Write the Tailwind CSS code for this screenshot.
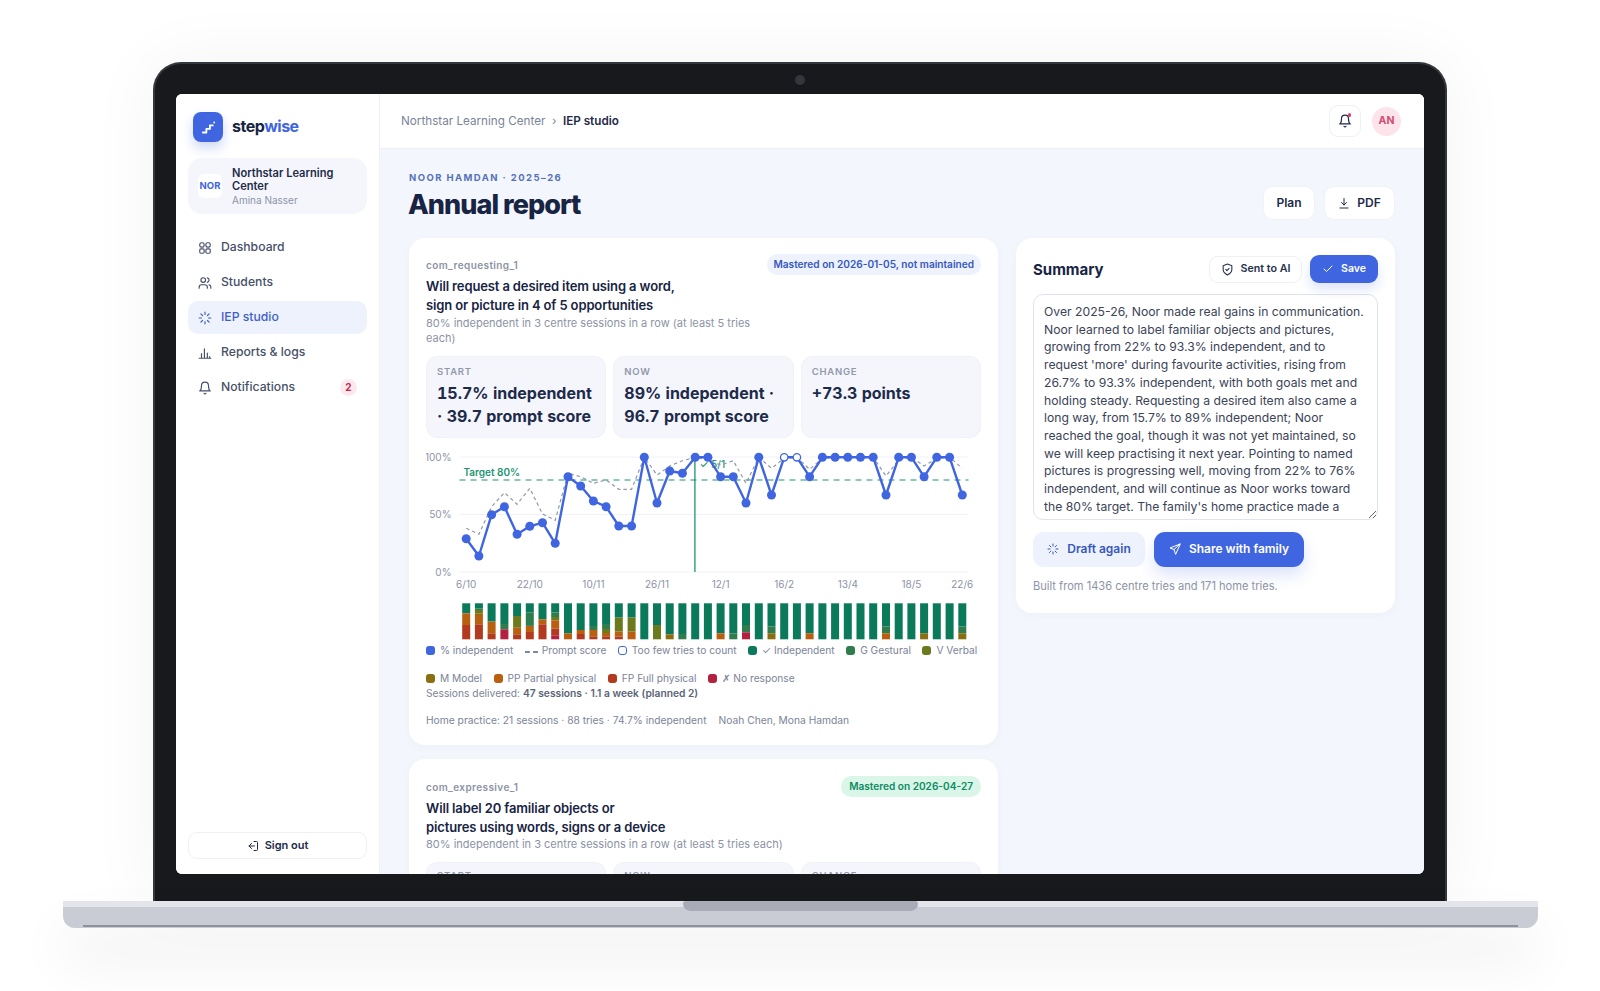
<!DOCTYPE html>
<html lang="en">

<head>
    <meta charset="UTF-8">
    <meta name="viewport" content="width=device-width, initial-scale=1.0">
    <title>Stepwise - Annual report</title>
    <script src="https://cdn.jsdelivr.net/npm/@tailwindcss/browser@4"></script>
</head>

<body class="bg-white font-['Inter',sans-serif]">
    <div class="w-[1600px] h-[991px] overflow-hidden flex flex-col items-center pt-[62px]">

        <!-- lid -->
        <div class="relative z-10 w-[1294px] h-[839px] shrink-0 bg-[#17191d] rounded-t-[28px] border-t-2 border-x-2 border-[#34373c] px-[21px] pt-[30px] pb-[26px] shadow-[0_0_70px_rgba(0,0,0,0.05)]">
            <div class="absolute left-1/2 top-[11px] -ml-[5px] w-[10px] h-[10px] rounded-full bg-[#33363b]"></div>

            <!-- screen -->
            <div class="flex h-[780px] w-[1248px] overflow-hidden rounded-[6px] bg-white">

                <!-- sidebar -->
                <aside class="w-[204px] shrink-0 border-r border-[#eef0f6] bg-white flex flex-col px-3 pt-[18px] pb-[15px]">
                    <div class="flex items-center gap-[9px] pl-[5px]">
                        <div class="w-[30px] h-[30px] rounded-[8px] bg-[#3f66e0] flex items-center justify-center shadow-[0_6px_12px_rgba(63,102,224,0.25)]">
                            <svg width="17" height="17" viewBox="0 0 24 24" fill="none" stroke="white" stroke-width="2.6" stroke-linecap="round" stroke-linejoin="round"><path d="M4 19h5v-5h5V9h4" /><path d="M20 5h.01" /></svg>
                        </div>
                        <div class="-mt-[2px] text-[16px] font-bold tracking-[-0.03em] text-[#172443]">step<span class="text-[#3f66e0]">wise</span></div>
                    </div>

                    <div class="mt-[16px] h-[56px] rounded-[14px] bg-[#f4f6fc] flex items-center gap-[10px] pl-[10px] pr-2">
                        <div class="w-6 h-6 shrink-0 rounded-[6px] bg-white flex items-center justify-center text-[9.5px] font-bold text-[#3f66e0]">NOR</div>
                        <div class="pt-[2px]">
                            <div class="text-[11.1px] leading-[13px] font-semibold text-[#1e2a4a]">Northstar Learning Center</div>
                            <div class="text-[10px] leading-[15px] text-[#8c93a6]">Amina Nasser</div>
                        </div>
                    </div>

                    <nav class="mt-[17px] flex flex-col gap-[2px] text-[12.2px] font-medium text-[#475069]">
                        <a class="h-[33px] flex items-center gap-[9px] px-[10px]">
                            <svg class="w-[14px] h-[14px]" viewBox="0 0 24 24" fill="none" stroke="currentColor" stroke-width="2"><rect x="3" y="3" width="7.5" height="7.5" rx="3" /><rect x="13.5" y="3" width="7.5" height="7.5" rx="3" /><rect x="3" y="13.5" width="7.5" height="7.5" rx="2" /><rect x="13.5" y="13.5" width="7.5" height="7.5" rx="2" /></svg>
                            Dashboard
                        </a>
                        <a class="h-[33px] flex items-center gap-[9px] px-[10px]">
                            <svg class="w-[14px] h-[14px]" viewBox="0 0 24 24" fill="none" stroke="currentColor" stroke-width="2" stroke-linecap="round"><path d="M16 21v-2a4 4 0 0 0-4-4H6a4 4 0 0 0-4 4v2" /><circle cx="9" cy="7" r="4" /><path d="M22 21v-2a4 4 0 0 0-3-3.87" /><path d="M16 3.13a4 4 0 0 1 0 7.75" /></svg>
                            Students
                        </a>
                        <a class="h-[33px] flex items-center gap-[9px] px-[10px] rounded-[10px] bg-[#eef2fd] text-[#3f5fc8]">
                            <svg class="w-[14px] h-[14px]" viewBox="0 0 24 24" fill="none" stroke="currentColor" stroke-width="2" stroke-linecap="round"><path d="M12 2v4M12 18v4M4.93 4.93l2.83 2.83M16.24 16.24l2.83 2.83M2 12h4M18 12h4M4.93 19.07l2.83-2.83M16.24 7.76l2.83-2.83" /></svg>
                            IEP studio
                        </a>
                        <a class="h-[33px] flex items-center gap-[9px] px-[10px]">
                            <svg class="w-[14px] h-[14px]" viewBox="0 0 24 24" fill="none" stroke="currentColor" stroke-width="2" stroke-linecap="round"><path d="M2 21h20M6 21v-8M11 21V5M16 21v-9M20 21v-3" /></svg>
                            Reports &amp; logs
                        </a>
                        <a class="h-[33px] flex items-center gap-[9px] px-[10px]">
                            <svg class="w-[14px] h-[14px]" viewBox="0 0 24 24" fill="none" stroke="currentColor" stroke-width="2" stroke-linecap="round" stroke-linejoin="round"><path d="M6 8a6 6 0 0 1 12 0c0 7 3 9 3 9H3s3-2 3-9" /><path d="M10.3 21a1.94 1.94 0 0 0 3.4 0" /></svg>
                            Notifications
                            <span class="ml-auto w-[17px] h-[17px] rounded-full bg-[#fde8ee] text-[#be2d55] text-[10px] font-bold flex items-center justify-center">2</span>
                        </a>
                    </nav>

                    <button class="mt-auto h-[27px] rounded-[9px] border border-[#eef0f6] bg-white flex items-center justify-center gap-[6px] text-[11px] font-semibold text-[#1e2a4a]">
                        <svg class="w-3 h-3" viewBox="0 0 24 24" fill="none" stroke="currentColor" stroke-width="2" stroke-linecap="round" stroke-linejoin="round"><path d="M14 3h5a2 2 0 0 1 2 2v14a2 2 0 0 1-2 2h-5" /><path d="M9 17l-5-5 5-5" /><path d="M4 12h11" /></svg>
                        Sign out
                    </button>
                </aside>

                <!-- main -->
                <div class="flex-1 min-w-0 flex flex-col bg-[#f4f6fd]">
                    <header class="h-[55px] shrink-0 bg-white border-b border-[#eef0f6] flex items-center pl-[21px] pr-[23px]">
                        <div class="pt-[2px] text-[11.7px] text-[#7b8499]">Northstar Learning Center<span class="mx-[6.5px]">›</span><span class="font-semibold text-[#1e2a4a]">IEP studio</span></div>
                        <div class="ml-auto flex items-center gap-[11px]">
                            <div class="relative w-[32px] h-[32px] rounded-[9px] border border-[#eef0f6] flex items-center justify-center">
                                <svg class="w-[14px] h-[14px] text-[#1e2a4a]" viewBox="0 0 24 24" fill="none" stroke="currentColor" stroke-width="2" stroke-linecap="round" stroke-linejoin="round"><path d="M6 8a6 6 0 0 1 12 0c0 7 3 9 3 9H3s3-2 3-9" /><path d="M10.3 21a1.94 1.94 0 0 0 3.4 0" /></svg>
                                <span class="absolute top-[7px] right-[9px] w-[3.5px] h-[3.5px] rounded-full bg-[#e0405f]"></span>
                            </div>
                            <div class="w-[29px] h-[29px] rounded-full bg-[#fde3ea] text-[#d14d72] text-[10.5px] font-bold flex items-center justify-center">AN</div>
                        </div>
                    </header>

                    <div class="flex-1 min-h-0 overflow-hidden px-[29px] pt-[22px]">
                        <div class="flex items-end justify-between">
                            <div>
                                <div class="text-[9.5px] leading-[14px] font-bold tracking-[0.15em] text-[#5472b8]">NOOR HAMDAN · 2025–26</div>
                                <h1 class="mt-[3px] -ml-px text-[27px] leading-[34px] font-extrabold tracking-[-0.035em] text-[#172443]">Annual report</h1>
                            </div>
                            <div class="flex gap-[9px] mb-[2px]">
                                <button class="w-[52px] h-[34px] pb-px rounded-[10px] bg-white border border-[#f0f2f8] text-[12px] font-semibold text-[#1e2a4a]">Plan</button>
                                <button class="w-[71px] h-[34px] pb-px rounded-[10px] bg-white border border-[#f0f2f8] text-[12px] font-semibold text-[#1e2a4a] flex items-center justify-center gap-[7px]">
                                    <svg class="w-3 h-3" viewBox="0 0 24 24" fill="none" stroke="currentColor" stroke-width="2" stroke-linecap="round" stroke-linejoin="round"><path d="M12 3v13M7 11l5 5 5-5M4 22h16" /></svg>
                                    PDF
                                </button>
                            </div>
                        </div>

                        <div class="mt-[16px] grid grid-cols-[589px_379px] gap-[18px] items-start">
                            <!-- goals -->
                            <div class="flex flex-col gap-[14px]">
                                <section class="rounded-[16px] bg-white pt-4 pb-[17px] px-[17px] shadow-[0_2px_10px_rgba(40,60,120,0.03)]">
                                    <div class="flex items-start justify-between gap-2">
                                        <div class="min-w-0 flex-1">
                                            <div class="pt-[4px] text-[10px] leading-[14px] font-semibold tracking-[0.04em] text-[#8c93a6]">com_requesting_1</div>
                                            <h2 class="mt-[5px] text-[13px] leading-[19px] font-semibold tracking-[-0.01em] text-[#172443]">Will request a desired item using a word,<br>sign or picture in 4 of 5 opportunities</h2>
                                            <p class="pt-[0.5px] text-[11px] leading-[15.5px] text-[#8c93a6]">80% independent in 3 centre sessions in a row (at least 5 tries each)</p>
                                        </div>
                                        <span class="shrink-0 h-[21px] px-[7px] rounded-full bg-[#eef2fd] text-[10.1px] leading-[21px] font-semibold text-[#3558c0]">Mastered on 2026-01-05, not maintained</span>
                                    </div>

                                    <div class="mt-[9.5px] grid grid-cols-3 gap-[7px]">
                                        <div class="rounded-[11px] bg-[#f4f6fc] border border-[#f0f2f9] pl-[10px] pr-1 pt-[7.5px] pb-2">
                                            <div class="text-[9.5px] leading-[14px] font-semibold tracking-[0.08em] text-[#9198ab]">START</div>
                                            <div class="mt-[3px] text-[16px] leading-[23.5px] font-bold tabular-nums text-[#1e2a4a]">15.7% independent · 39.7 prompt score</div>
                                        </div>
                                        <div class="rounded-[11px] bg-[#f4f6fc] border border-[#f0f2f9] pl-[10px] pr-1 pt-[7.5px] pb-2">
                                            <div class="text-[9.5px] leading-[14px] font-semibold tracking-[0.08em] text-[#9198ab]">NOW</div>
                                            <div class="mt-[3px] text-[16px] leading-[23.5px] font-bold tabular-nums text-[#1e2a4a]">89% independent · 96.7 prompt score</div>
                                        </div>
                                        <div class="rounded-[11px] bg-[#f4f6fc] border border-[#f0f2f9] pl-[10px] pr-1 pt-[7.5px] pb-2">
                                            <div class="text-[9.5px] leading-[14px] font-semibold tracking-[0.08em] text-[#9198ab]">CHANGE</div>
                                            <div class="mt-[3px] text-[16px] leading-[23.5px] font-bold tabular-nums text-[#1e2a4a]">+73.3 points</div>
                                        </div>
                                    </div>

                                    <svg id="chart" class="block mt-[7px] w-[555px] h-[198px] font-['Inter',sans-serif]" viewBox="426.5 445 555 198"></svg>

                                    <div class="flex flex-wrap gap-x-[11.5px] gap-y-[13px] text-[10.2px] leading-[15px] text-[#7b8499]">
                                        <span class="flex items-center gap-[5px]"><i class="w-[9px] h-[9px] rounded-[3px] bg-[#3f66e0]"></i>% independent</span>
                                        <span class="flex items-center gap-[4px]"><i class="w-[13px] h-[2px] mt-1 border-t-2 border-dashed border-[#7b8499]"></i>Prompt score</span>
                                        <span class="flex items-center gap-[5px]"><i class="w-[9px] h-[9px] rounded-[3px] border border-[#3f66e0]"></i>Too few tries to count</span>
                                        <span class="flex items-center gap-[5px]"><i class="w-[9px] h-[9px] rounded-[3px] bg-[#0b7a5a]"></i>✓ Independent</span>
                                        <span class="flex items-center gap-[5px]"><i class="w-[9px] h-[9px] rounded-[3px] bg-[#2f7d4f]"></i>G Gestural</span>
                                        <span class="flex items-center gap-[5px]"><i class="w-[9px] h-[9px] rounded-[3px] bg-[#6b7a1d]"></i>V Verbal</span>
                                        <span class="flex items-center gap-[5px]"><i class="w-[9px] h-[9px] rounded-[3px] bg-[#8a6f10]"></i>M Model</span>
                                        <span class="flex items-center gap-[5px]"><i class="w-[9px] h-[9px] rounded-[3px] bg-[#b8600f]"></i>PP Partial physical</span>
                                        <span class="flex items-center gap-[5px]"><i class="w-[9px] h-[9px] rounded-[3px] bg-[#b23a1e]"></i>FP Full physical</span>
                                        <span class="flex items-center gap-[5px]"><i class="w-[9px] h-[9px] rounded-[3px] bg-[#b3213f]"></i><span><span class="font-['DejaVu_Sans',sans-serif]">✗</span> No response</span></span>
                                    </div>
                                    <p class="text-[10.25px] leading-[15px] text-[#7b8499]">Sessions delivered: <b class="font-semibold text-[#5a6478]">47 sessions · 1.1 a week (planned 2)</b></p>
                                    <p class="mt-3 text-[10.25px] leading-[15px] text-[#7b8499]">Home practice: 21 sessions · 88 tries · 74.7% independent<span class="ml-3">Noah Chen, Mona Hamdan</span></p>
                                </section>

                                <section class="rounded-[16px] bg-white pt-[17px] pb-[17px] px-[17px] shadow-[0_2px_10px_rgba(40,60,120,0.03)]">
                                    <div class="flex items-start justify-between gap-2">
                                        <div class="min-w-0 flex-1">
                                            <div class="pt-[4px] text-[10px] leading-[14px] font-semibold tracking-[0.04em] text-[#8c93a6]">com_expressive_1</div>
                                            <h2 class="mt-[5px] text-[13px] leading-[19px] font-semibold tracking-[-0.01em] text-[#172443]">Will label 20 familiar objects or<br>pictures using words, signs or a device</h2>
                                            <p class="pt-[0.5px] text-[11px] leading-[15.5px] text-[#8c93a6]">80% independent in 3 centre sessions in a row (at least 5 tries each)</p>
                                        </div>
                                        <span class="shrink-0 h-[21px] px-[8px] rounded-full bg-[#d9f6e9] text-[10.1px] leading-[21px] font-semibold text-[#0e8a63]">Mastered on 2026-04-27</span>
                                    </div>
                                    <div class="mt-[9.5px] grid grid-cols-3 gap-[7px]">
                                        <div class="h-[81px] rounded-[11px] bg-[#f4f6fc] border border-[#f0f2f9] pl-[10px] pt-[6px] text-[9.5px] leading-[14px] font-semibold tracking-[0.08em] text-[#9198ab]">START</div>
                                        <div class="h-[81px] rounded-[11px] bg-[#f4f6fc] border border-[#f0f2f9] pl-[10px] pt-[6px] text-[9.5px] leading-[14px] font-semibold tracking-[0.08em] text-[#9198ab]">NOW</div>
                                        <div class="h-[81px] rounded-[11px] bg-[#f4f6fc] border border-[#f0f2f9] pl-[10px] pt-[6px] text-[9.5px] leading-[14px] font-semibold tracking-[0.08em] text-[#9198ab]">CHANGE</div>
                                    </div>
                                </section>
                            </div>

                            <!-- summary -->
                            <section class="rounded-[16px] bg-white px-[17px] pt-[17px] pb-[19px] shadow-[0_2px_10px_rgba(40,60,120,0.03)]">
                                <div class="flex items-center">
                                    <h2 class="pt-[2px] text-[15px] font-bold text-[#172443]">Summary</h2>
                                    <button class="ml-auto w-[93px] h-[27px] rounded-[9px] border border-[#eef0f6] bg-white flex items-center justify-center gap-[7px] text-[10.7px] font-semibold text-[#25304d]">
                                        <svg class="w-[13px] h-[13px]" viewBox="0 0 24 24" fill="none" stroke="currentColor" stroke-width="2" stroke-linecap="round" stroke-linejoin="round"><path d="M12 22s8-4 8-10V5l-8-3-8 3v7c0 6 8 10 8 10" /><path d="M9 12l2 2 4-4" /></svg>
                                        Sent to AI
                                    </button>
                                    <button class="ml-2 w-[68px] h-[28px] rounded-[9px] bg-[#3f66e0] flex items-center justify-center gap-[7px] text-[10.5px] font-semibold text-white shadow-[0_6px_12px_rgba(63,102,224,0.18)]">
                                        <svg class="w-3 h-3" viewBox="0 0 24 24" fill="none" stroke="currentColor" stroke-width="2" stroke-linecap="round" stroke-linejoin="round"><path d="M20 6 9 17l-5-5" /></svg>
                                        Save
                                    </button>
                                </div>

                                <textarea readonly class="mt-[11px] block w-full h-[226px] overflow-hidden resize-y rounded-[10px] border border-[#dfe3ec] bg-white pl-[10px] pr-[10px] pt-[8px] text-[12.2px] leading-[17.7px] text-[#3a4358] outline-none">Over 2025-26, Noor made real gains in communication. Noor learned to label familiar objects and pictures, growing from 22% to 93.3% independent, and to request 'more' during favourite activities, rising from 26.7% to 93.3% independent, with both goals met and holding steady. Requesting a desired item also came a long way, from 15.7% to 89% independent; Noor reached the goal, though it was not yet maintained, so we will keep practising it next year. Pointing to named pictures is progressing well, moving from 22% to 76% independent, and will continue as Noor works toward the 80% target. The family's home practice made a</textarea>

                                <div class="mt-[12px] flex gap-[9px]">
                                    <button class="w-[112px] h-[35px] pb-px rounded-[11px] bg-[#eef2fd] flex items-center justify-center gap-2 text-[12px] font-semibold text-[#3558c0]">
                                        <svg class="w-3 h-3" viewBox="0 0 24 24" fill="none" stroke="currentColor" stroke-width="2" stroke-linecap="round"><path d="M12 2v4M12 18v4M4.93 4.93l2.83 2.83M16.24 16.24l2.83 2.83M2 12h4M18 12h4M4.93 19.07l2.83-2.83M16.24 7.76l2.83-2.83" /></svg>
                                        Draft again
                                    </button>
                                    <button class="w-[150px] h-[35px] pb-px rounded-[11px] bg-[#3f66e0] flex items-center justify-center gap-2 text-[12px] font-semibold text-white shadow-[0_8px_16px_rgba(63,102,224,0.18)]">
                                        <svg class="w-3 h-3" viewBox="0 0 24 24" fill="none" stroke="currentColor" stroke-width="2" stroke-linecap="round" stroke-linejoin="round"><path d="M22 2 2 10l8 3 3 9z" /><path d="M10 13 22 2" /></svg>
                                        Share with family
                                    </button>
                                </div>
                                <p class="mt-[12px] text-[11.1px] leading-[15px] text-[#8c93a6]">Built from 1436 centre tries and 171 home tries.</p>
                            </section>
                        </div>
                    </div>
                </div>
            </div>
        </div>

        <!-- base -->
        <div class="relative z-20 w-[1475px] h-[27px] shrink-0 rounded-b-[12px] bg-[#c9ccd5] border-t-[6px] border-[#e3e5ea] flex items-end px-[20px] pb-[1px] shadow-[0_32px_55px_rgba(0,0,0,0.08)]">
            <div class="w-full h-[2px] bg-[#8e909c]"></div>
            <div class="absolute left-[620px] -top-[6px] w-[235px] h-[10px] rounded-b-[8px] rounded-t-[3px] bg-[#a9acb6]"></div>
        </div>
    </div>

    <script>
        // chart data, read off as page y coordinates
        const indep = [296, 348, 224, 200, 283, 259, 248, 310, 110, 138, 183, 200, 258, 258, 52, 189, 93, 100, 52, 52, 110, 110, 189, 52, 165, 52, 52, 110, 52, 52, 52, 52, 52, 165, 52, 52, 110, 52, 52, 165];
        const prompt = [265, 283, 200, 158, 193, 145, 222, 241, 100, 110, 130, 120, 148, 148, 52, 105, 78, 62, 52, 60, 75, 62, 130, 52, 85, 55, 52, 88, 55, 52, 52, 52, 52, 108, 60, 52, 78, 55, 52, 85];
        const open = [25, 26];

        // prompt levels per session, top to bottom, out of 108
        const colors = { i: '#0b7a5a', g: '#2f7d4f', v: '#6b7a1d', m: '#8a6f10', p: '#b8600f', f: '#b23a1e', x: '#b3213f' };
        const stacks = [
            { i: 30, p: 35, f: 43 }, { i: 15, g: 5, v: 10, m: 5, p: 28, f: 45 }, { i: 55, p: 35, f: 18 }, { i: 62, g: 16, x: 30 },
            { i: 38, v: 35, p: 20, f: 15 }, { i: 28, g: 40, p: 18, f: 22 }, { i: 48, p: 15, f: 45 }, { i: 27, g: 14, v: 10, p: 25, f: 20, x: 12 },
            { i: 90, p: 18 }, { i: 80, p: 12, f: 16 }, { i: 68, g: 12, p: 20, f: 8 }, { i: 62, g: 15, v: 12, p: 10, f: 9 },
            { i: 43, v: 42, p: 15, f: 8 }, { i: 43, v: 42, p: 23 }, { i: 108 }, { i: 65, v: 43 }, { i: 93, m: 15 }, { i: 92, g: 16 },
            { i: 108 }, { i: 108 }, { i: 90, p: 18 }, { i: 90, g: 18 }, { i: 65, g: 22, x: 21 }, { i: 108 }, { i: 70, g: 20, m: 18 },
            { i: 108 }, { i: 108 }, { i: 90, p: 18 }, { i: 108 }, { i: 108 }, { i: 108 }, { i: 108 }, { i: 108 },
            { i: 70, g: 20, p: 18 }, { i: 108 }, { i: 108 }, { i: 90, m: 18 }, { i: 108 }, { i: 108 }, { i: 70, g: 20, m: 18 }
        ];

        const px = i => 466.7 + i * 12.72;
        const py = y => 440 + y / 3;
        const line = arr => arr.map((y, i) => px(i).toFixed(1) + ',' + py(y).toFixed(1)).join(' ');
        let svg = '';

        // grid
        [[457, '100%'], [514.5, '50%'], [572, '0%']].forEach(([y, label]) => {
            svg += `<line x1="460" x2="969" y1="${y}" y2="${y}" stroke="#f0f2f7" stroke-width="1"/>`;
            svg += `<text x="452" y="${y + 3.5}" text-anchor="end" font-size="10" fill="#8c93a6">${label}</text>`;
        });

        // target and mastery marker
        svg += `<line x1="460" x2="969" y1="480" y2="480" stroke="#1b9470" stroke-width="1.1" stroke-dasharray="6 5"/>`;
        svg += `<text x="464" y="475.5" font-size="10" font-weight="600" fill="#1b9470">Target 80%</text>`;
        svg += `<line x1="695.4" x2="695.4" y1="457" y2="572" stroke="#1b9470" stroke-width="1.3"/>`;
        svg += `<text x="700" y="468" font-size="10" font-weight="500" fill="#1b9470">✓ 5/1</text>`;

        // lines
        svg += `<polyline points="${line(prompt)}" fill="none" stroke="#9198ab" stroke-width="1.2" stroke-dasharray="3.5 3"/>`;
        svg += `<polyline points="${line(indep)}" fill="none" stroke="#3f66e0" stroke-width="2.4" stroke-linejoin="round"/>`;
        indep.forEach((y, i) => {
            const isOpen = open.includes(i);
            svg += `<circle cx="${px(i).toFixed(1)}" cy="${py(y).toFixed(1)}" r="${isOpen ? 3.7 : 4.5}" fill="${isOpen ? '#fff' : '#3f66e0'}" stroke="#3f66e0" stroke-width="${isOpen ? 1.3 : 0}"/>`;
        });

        // x labels
        [[0, '6/10'], [5, '22/10'], [10, '10/11'], [15, '26/11'], [20, '12/1'], [25, '16/2'], [30, '13/4'], [35, '18/5'], [39, '22/6']].forEach(([i, label]) => {
            svg += `<text x="${px(i)}" y="587.5" text-anchor="middle" font-size="10" fill="#8c93a6">${label}</text>`;
        });

        // stacked bars
        stacks.forEach((stack, i) => {
            let y = 603.3;
            Object.keys(stack).forEach(k => {
                const h = stack[k] / 3;
                svg += `<rect x="${(px(i) - 4).toFixed(1)}" y="${y.toFixed(1)}" width="8" height="${h.toFixed(1)}" fill="${colors[k]}"/>`;
                y += h;
            });
        });

        document.getElementById('chart').innerHTML = svg;
    </script>
</body>

</html>
